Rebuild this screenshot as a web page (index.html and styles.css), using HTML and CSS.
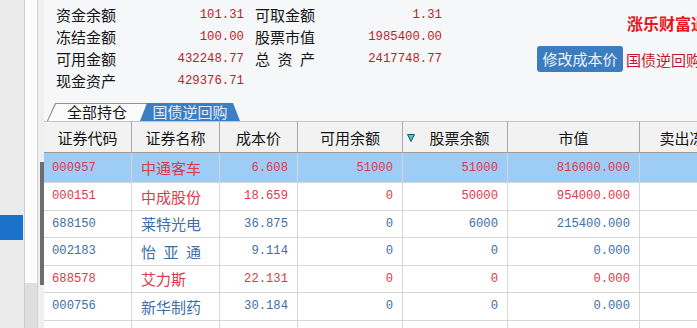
FILE: index.html
```html
<!DOCTYPE html>
<html>
<head>
<meta charset="utf-8">
<title>资金持仓</title>
<link rel="stylesheet" href="styles.css">
</head>
<body>
<div class="app">
  <div class="side">
    <div class="nav"><div class="nav-on"></div></div>
    <div class="strip"></div>
    <div class="bar"><div class="thumb"></div></div>
  </div>

  <div class="main">
    <div class="info">
      <div class="fund">
        <span class="lbl">资金余额</span><span class="num">101.31</span>
        <span class="lbl c2">可取金额</span><span class="num">1.31</span>
        <span class="lbl">冻结金额</span><span class="num">100.00</span>
        <span class="lbl c2">股票市值</span><span class="num">1985400.00</span>
        <span class="lbl">可用金额</span><span class="num">432248.77</span>
        <span class="lbl c2">总资产</span><span class="num">2417748.77</span>
        <span class="lbl">现金资产</span><span class="num">429376.71</span>
      </div>
      <div class="tools">
        <div class="brand">涨乐财富通</div>
        <div class="acts"><a href="#" class="btn">修改成本价</a><a href="#" class="rev">国债逆回购</a></div>
      </div>
    </div>

    <div class="tabs">
      <div class="tab tab-all">全部持仓</div>
      <div class="tab tab-rev">国债逆回购</div>
    </div>

    <table class="grid">
      <colgroup>
        <col style="width:88px"><col style="width:88px"><col style="width:78px"><col style="width:105px">
        <col style="width:105px"><col style="width:132px"><col style="width:100px">
      </colgroup>
      <tr class="head">
        <th>证券代码</th><th>证券名称</th><th>成本价</th><th>可用余额</th>
        <th class="sorted"><svg class="sort" width="8" height="8" viewBox="0 0 8 8"><polygon points="0.5,0.5 7.5,0.5 4,7.5" fill="#2fd0d0" stroke="#1d5b66" stroke-width="1"/></svg>股票余额</th>
        <th>市值</th><th>卖出冻结</th>
      </tr>
      <tr class="r sel">
        <td class="code">000957</td><td class="name">中通客车</td><td>6.608</td><td>51000</td><td>51000</td><td>816000.000</td><td></td>
      </tr>
      <tr class="r">
        <td class="code">000151</td><td class="name">中成股份</td><td>18.659</td><td>0</td><td>50000</td><td>954000.000</td><td></td>
      </tr>
      <tr class="b">
        <td class="code">688150</td><td class="name">莱特光电</td><td>36.875</td><td>0</td><td>6000</td><td>215400.000</td><td></td>
      </tr>
      <tr class="b">
        <td class="code">002183</td><td class="name"><span class="sp">怡亚通</span></td><td>9.114</td><td>0</td><td>0</td><td>0.000</td><td></td>
      </tr>
      <tr class="r">
        <td class="code">688578</td><td class="name">艾力斯</td><td>22.131</td><td>0</td><td>0</td><td>0.000</td><td></td>
      </tr>
      <tr class="b">
        <td class="code">000756</td><td class="name">新华制药</td><td>30.184</td><td>0</td><td>0</td><td>0.000</td><td></td>
      </tr>
      <tr>
        <td></td><td></td><td></td><td></td><td></td><td></td><td></td>
      </tr>
    </table>
  </div>
</div>
</body>
</html>
```

FILE: styles.css
```css
* {margin:0; padding:0; box-sizing:border-box;}
body {width:697px; height:328px; overflow:hidden; font-family:"Noto Sans CJK SC", sans-serif; font-size:15px; color:#141414; background:#f6f7f9;}
.app {display:flex; height:328px;}

/* 左侧栏 */
.side {display:flex; width:44px; flex-shrink:0;}
.nav {width:25px; background:#ebebeb; border-right:1px solid #cdcdcd; padding-top:215px;}
.nav-on {width:23px; height:25px; background:#1a73c9;}
.strip {width:13px; background:linear-gradient(#fcfcfc 283px, #dedede 283px); border-right:1px solid #cfcfcf;}
.bar {width:6px; background:#efefef; padding:162px 0 0 2px;}
.thumb {height:123px; background:#6d6d6d;}

.main {flex:1; min-width:0; overflow:hidden; background:#f6f7f9;}

/* 资金信息 */
.info {display:flex; height:101px;}
.fund {display:grid; grid-template-columns:60px 128px 71px 127px; grid-auto-rows:22px; align-content:start; padding:4px 0 0 12px; line-height:22px;}
.lbl {text-align:justify; text-align-last:justify; white-space:nowrap;}
.lbl.c2 {padding-left:11px;}
.num {text-align:right; font-family:"Liberation Mono", monospace; font-size:12.3px; color:#c3192b;}
.tools {margin-left:95px; padding-top:13px; white-space:nowrap;}
.brand {padding-left:90px; line-height:20px; font-size:16px; font-weight:bold; color:#e8141e;}
.acts {display:flex; align-items:center; margin-top:13px;}
.btn {width:86px; height:26px; line-height:26px; text-align:center; background:#3c7dbf; color:#eef4fb; border-radius:3px; text-decoration:none;}
.rev {margin-left:3px; color:#c4152a; text-decoration:none;}

/* 选项卡 */
.tabs {display:flex; height:20px; padding:2px 0 0 3px;}
.tab {position:relative; z-index:0; height:18px; line-height:18px; width:100px; text-align:center; white-space:nowrap;}
.tab::before, .tab::after {content:""; position:absolute; z-index:-1;}
.tab-all {color:#141414;}
.tab-all::before {inset:0; background:#8e8e8e; clip-path:polygon(0 100%, 8px 0, 100% 0, 100% 100%);}
.tab-all::after {inset:1px 0 0 1px; background:#fbfbfb; clip-path:polygon(0 100%, 8px 0, 100% 0, 100% 100%);}
.tab-rev {z-index:1; margin-left:-7px; color:#e4eefb;}
.tab-rev::before {inset:0; background:#3b7ec3; clip-path:polygon(0 100%, 7px 0, calc(100% - 7px) 0, 100% 100%);}

/* 持仓表格 */
.grid {table-layout:fixed; width:696px; border-spacing:0; background:#fff;}
.grid th {font-weight:normal; background:#f2f2f2; border-top:1px solid #c6c6c6; border-bottom:1px solid #9c9c9c; border-right:1px solid #a8a8a8; white-space:nowrap;}
.grid tr.head {height:32px;}
.grid th.sorted {position:relative; padding-left:9px;}
.sort {position:absolute; left:4px; top:12px;}
.grid tr {height:27.5px;}
.grid tr.sel {height:30px;}
.grid td {border-right:1px solid #d6d6d6; border-bottom:1px solid #d6d6d6; padding:0 9px; text-align:right; font-family:"Liberation Mono", monospace; font-size:12.2px; white-space:nowrap; overflow:hidden;}
.grid td.code {text-align:left; padding-left:8px;}
.grid td.name {text-align:left; padding-left:9px; font-family:"Noto Sans CJK SC", sans-serif; font-size:15px;}
.sp {display:inline-block; width:60px; text-align:justify; text-align-last:justify;}
.grid tr.sel td {background:#9dcdf5;}
.grid tr.r td {color:#e0384a;}
.grid tr.b td {color:#3e6ea8;}
```
